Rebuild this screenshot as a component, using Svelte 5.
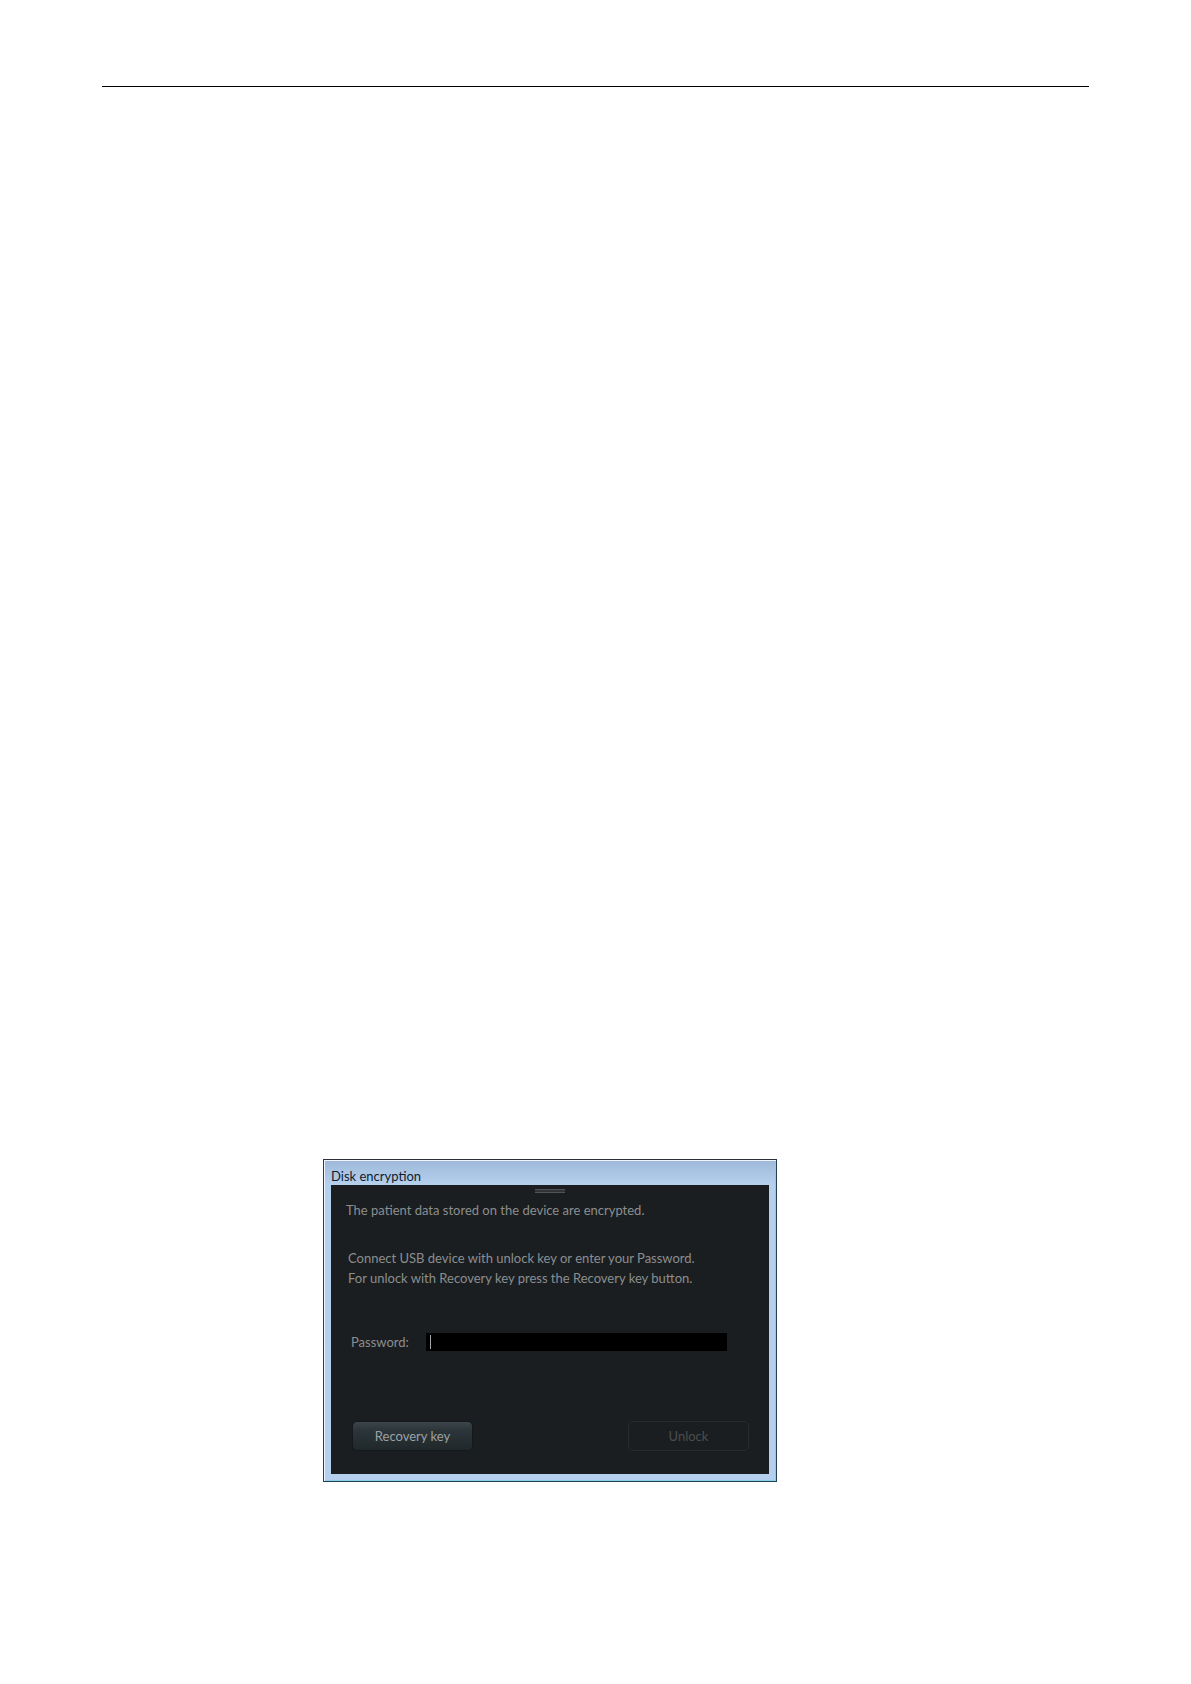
<script>
  let password = $state('');
</script>

<main class="page">
  <hr class="rule" />

  <section class="dialog" aria-labelledby="dialog-title">
    <h1 class="title" id="dialog-title">Disk encryption</h1>
    <form class="panel" onsubmit={(event) => event.preventDefault()}>
      <div class="grip"></div>
      <p class="lead">The patient data stored on the device are encrypted.</p>
      <p class="help">
        Connect USB device with unlock key or enter your Password.<br />
        For unlock with Recovery key press the Recovery key button.
      </p>
      <div class="field">
        <label for="password">Password:</label>
        <div class="entry">
          <input id="password" type="password" bind:value={password} />
          {#if !password}<span class="caret"></span>{/if}
        </div>
      </div>
      <div class="actions">
        <button class="recovery" type="button">Recovery key</button>
        <button class="unlock" type="submit" disabled={!password}>Unlock</button>
      </div>
    </form>
  </section>
</main>

<style>
  :global(body) {
    background: #fff;
  }

  .page {
    box-sizing: border-box;
    min-height: 100vh;
    padding: 86px 102px 96px;
    font-family: Lato, 'Open Sans', sans-serif;
    font-size: 13px;
    line-height: 20px;
  }

  .rule {
    height: 1px;
    margin: 0;
    border: 0;
    background: #000;
  }

  .dialog {
    box-sizing: border-box;
    max-width: 454px;
    margin: 1072px auto 0 221px;
    padding: 0 7px 7px 6px;
    border: 1px solid #24414f;
    border-top-color: #2b303a;
    background: linear-gradient(#9fb8da, #b4d0ed 24px, #b5cfee);
    box-shadow:
      inset 1px 1px #eef5fc,
      inset -1px -1px #86cfe6;
  }

  .title {
    margin: 0;
    padding: 6px 1px 0;
    height: 19px;
    color: #101b2e;
    font-size: 13px;
    font-weight: 400;
    line-height: 20px;
  }

  .panel {
    display: flex;
    flex-direction: column;
    margin-left: 1px;
    padding: 4px 15px 23px;
    background: #1a1e20;
    color: #8b8e90;
  }

  .grip {
    align-self: center;
    box-sizing: border-box;
    width: 30px;
    height: 4px;
    border: solid #505355;
    border-width: 1px 0;
    background: #303436;
  }

  p {
    margin: 0;
  }

  .lead {
    margin-top: 7px;
  }

  .help {
    margin: 28px 0 0 2px;
  }

  .field {
    display: flex;
    align-items: center;
    margin: 44px 27px 0 5px;
  }

  label {
    flex: 0 0 75px;
  }

  .entry {
    position: relative;
    display: flex;
    flex: 1;
  }

  input {
    box-sizing: border-box;
    width: 100%;
    height: 18px;
    padding: 0 4px;
    border: 0;
    outline: 0;
    background: #000;
    color: #b4b7b9;
    font: inherit;
  }

  .caret {
    position: absolute;
    top: 2px;
    left: 4px;
    width: 1px;
    height: 14px;
    background: #a4a6a8;
  }

  .actions {
    display: flex;
    justify-content: space-between;
    margin: 69px 5px 0 6px;
  }

  button {
    box-sizing: border-box;
    width: 121px;
    height: 30px;
    padding: 0;
    border: 1px solid #15191b;
    border-radius: 5px;
    font: inherit;
  }

  .recovery {
    background: linear-gradient(#3c464b, #2c3539 30%, #20282b);
    color: #9da1a4;
  }

  .unlock {
    border-color: #262c2f;
    background: #1a1e20;
    color: #4a4e51;
  }
</style>
